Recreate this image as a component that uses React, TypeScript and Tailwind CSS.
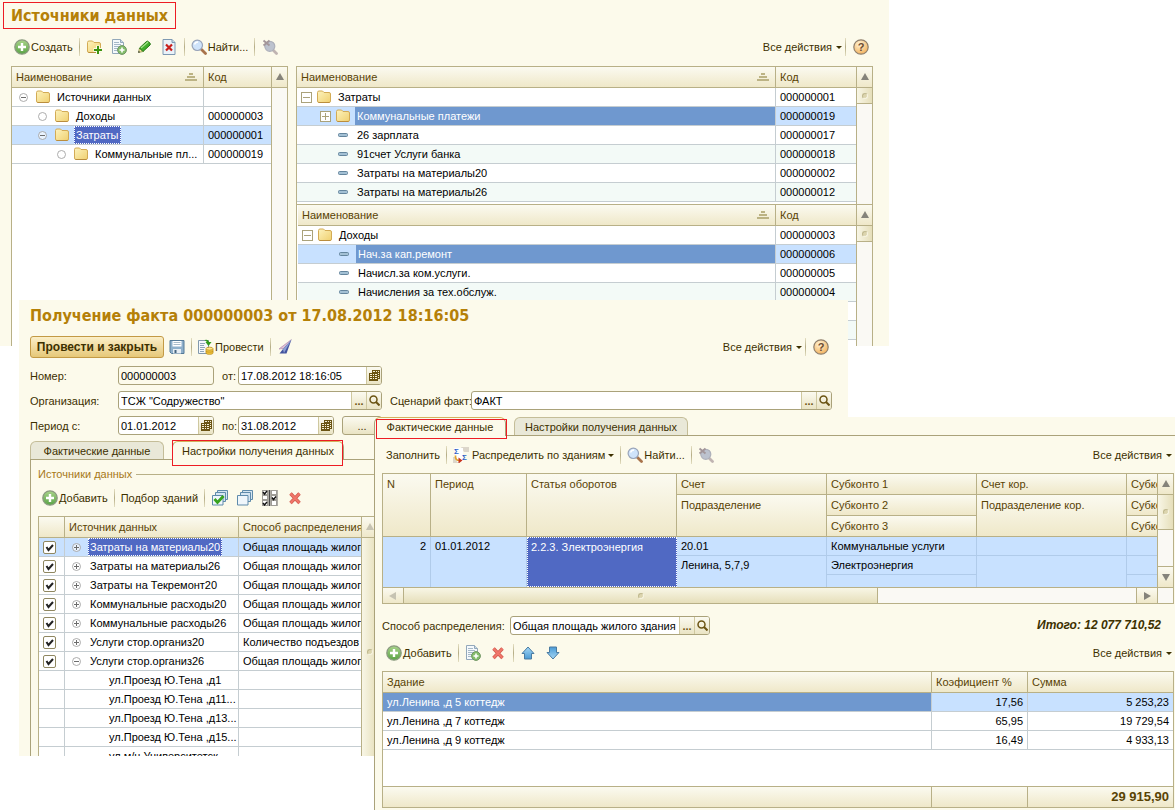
import type { ReactNode } from "react";
import clsx from "clsx";

const TH =
  "h-[21px] border-b border-r border-[#b8b087] bg-linear-to-b from-[#fbfaf0] to-[#efe8c9] pl-1 text-left align-top font-normal leading-5 text-[#594304] whitespace-nowrap overflow-hidden last:border-r-0";
const TD =
  "h-[19px] border-b border-r border-[#c5cdd1] p-0 leading-[18px] whitespace-nowrap overflow-hidden last:border-r-0";
const TABLE = "w-full table-fixed border-separate border-spacing-0";

/* ---------- iconos ---------- */

function Svg({ children }: { children: ReactNode }) {
  return (
    <svg viewBox="0 0 16 16" className="block size-4 shrink-0" aria-hidden="true">
      {children}
    </svg>
  );
}

const AddIcon = () => (
  <Svg>
    <defs>
      <linearGradient id="verde" x1="0" y1="0" x2="0" y2="1">
        <stop offset="0" stopColor="#a9d48b" />
        <stop offset="1" stopColor="#5aa345" />
      </linearGradient>
    </defs>
    <circle cx="8" cy="8" r="7.2" fill="url(#verde)" stroke="#8b9a80" strokeWidth="1.3" />
    <path d="M8 4v8M4 8h8" stroke="#fff" strokeWidth="2.4" />
  </Svg>
);

const FolderShape = () => (
  <>
    <defs>
      <linearGradient id="carpeta" x1="0" y1="0" x2="1" y2="1">
        <stop offset="0" stopColor="#fdf3bd" />
        <stop offset="1" stopColor="#f0d070" />
      </linearGradient>
    </defs>
    <path
      d="M1.5 3.5q0-1.5 1.5-1.5h3.5l1.5 1.5h5q1.5 0 1.5 1.5v7q0 1.5-1.5 1.5H3q-1.5 0-1.5-1.5z"
      fill="url(#carpeta)"
      stroke="#d3ab55"
    />
    <path d="M2.5 13.5h11" stroke="#ba8d3d" />
  </>
);

const FolderIcon = () => (
  <Svg>
    <FolderShape />
  </Svg>
);

const FolderAddIcon = () => (
  <Svg>
    <FolderShape />
    <path d="M12 6.5v9M7.5 11h9" stroke="#fbfaea" strokeWidth="4" />
    <path d="M12 7v8M8 11h8" stroke="#3d9410" strokeWidth="2" />
  </Svg>
);

const DocAddIcon = () => (
  <Svg>
    <path d="M1.5.5h8l3 3v11h-11z" fill="#f5f9fc" stroke="#93a8ba" />
    <path d="M9.5.5v3h3" fill="#cbdbe8" stroke="#93a8ba" />
    <path d="M3 3.5h5M3 5.5h7M3 7.5h6M3 9.5h4M3 11.5h3" stroke="#a5b8c8" />
    <circle cx="11" cy="11" r="4.4" fill="#83bd6a" stroke="#6f9464" />
    <path d="M11 8.5v5M8.5 11h5" stroke="#fff" strokeWidth="1.6" />
  </Svg>
);

const PencilIcon = () => (
  <Svg>
    <path d="M2.5 13.5l1-4.5 3.5 3.5z" fill="#f7e3a0" stroke="#7a8a3a" strokeWidth=".7" />
    <path d="M2.2 13.8l.5-2 1.5 1.5z" fill="#333" />
    <path d="M3.5 9l7-6.5q1-.8 2 .2l1.3 1.3q1 1 .2 2l-7 6.5z" fill="#3fae2a" stroke="#237512" />
    <path d="M5 9l7-6" stroke="#a5e28c" strokeWidth="1.2" />
  </Svg>
);

const DocDeleteIcon = () => (
  <Svg>
    <path d="M2 .5h9l3 3v12H2z" fill="#eaf2f9" stroke="#7e99b2" />
    <path d="M11 .5v3h3" fill="#c9d9e6" stroke="#7e99b2" />
    <path d="M5 5.5l6 6M11 5.5l-6 6" stroke="#c8201c" strokeWidth="2.2" />
  </Svg>
);

const SearchIcon = () => (
  <Svg>
    <path d="M10.5 10.5l4 4" stroke="#a8734b" strokeWidth="2.8" strokeLinecap="round" />
    <circle cx="6.3" cy="6.3" r="5.2" fill="#cfe3fa" stroke="#98a3b8" strokeWidth="1.2" />
    <path d="M3.5 5.5q1-2.5 3.5-2.5" fill="none" stroke="#fff" strokeWidth="1.5" />
  </Svg>
);

const SearchOffIcon = () => (
  <Svg>
    <path d="M11 11l3.5 3.5" stroke="#c0b4b2" strokeWidth="2.8" strokeLinecap="round" />
    <circle cx="7.8" cy="7.3" r="5" fill="#bcc2ce" stroke="#adb0ba" strokeWidth="1.2" />
    <path d="M1.5 1.5l6 5M7.5 1.5l-6 5" stroke="#a3969a" strokeWidth="1.9" />
  </Svg>
);

const HelpIcon = () => (
  <Svg>
    <defs>
      <radialGradient id="ayuda" cx=".4" cy=".3" r=".8">
        <stop offset="0" stopColor="#fff3d6" />
        <stop offset="1" stopColor="#f2ab50" />
      </radialGradient>
    </defs>
    <circle cx="8" cy="8" r="7.2" fill="url(#ayuda)" stroke="#8f7f6c" strokeWidth="1.2" />
    <text x="8" y="12" textAnchor="middle" fontSize="11" fontWeight="700" fill="#6b4a30">
      ?
    </text>
  </Svg>
);

const SaveIcon = () => (
  <Svg>
    <path d="M1 1.5h14v13H2.5L1 13z" fill="#8fb0cb" stroke="#557a98" />
    <path d="M3.5 2h9v5.5h-9z" fill="#fff" />
    <path d="M4.5 3.5h7M4.5 5.5h7" stroke="#a9bccb" />
    <path d="M4 10h8v4.5H4z" fill="#e7eef4" />
    <path d="M5.5 11h2v3h-2z" fill="#44657f" />
  </Svg>
);

const PostIcon = () => (
  <Svg>
    <path d="M.5 1.5h10v13H.5z" fill="#f4f8fb" stroke="#8299ad" />
    <path d="M2 4.5h5M2 6.5h4M2 8.5h5M2 10.5h4M2 12.5h4" stroke="#8fa6ba" />
    <path d="M6.5 1q4-1 4.5 2h2.5L10.5 7 7.5 3h1.5" fill="#2f9a1c" />
    <path d="M8 10v4c0 1.8 7 1.8 7 0v-4z" fill="#f3c63d" stroke="#bd8e1d" strokeWidth=".8" />
    <ellipse cx="11.5" cy="9.7" rx="3.5" ry="1.5" fill="#ffe88b" stroke="#bd8e1d" strokeWidth=".8" />
    <path d="M8 12c0 1.5 7 1.5 7 0" fill="none" stroke="#bd8e1d" strokeWidth=".8" />
  </Svg>
);

const PlaneIcon = () => (
  <Svg>
    <path d="M14.5.5L2 9.5l4 .5z" fill="#e0c3d6" />
    <path d="M14.5.5L2 10l4-.5" fill="none" stroke="#b58fb5" strokeWidth=".7" />
    <path d="M14.5.5L6 10l-3.5 4.5h7z" fill="#42539e" />
    <path d="M14.5.5L6 10.5l1 3.5z" fill="#8ea0d4" />
  </Svg>
);

const StackIcon = ({ checked = false }: { checked?: boolean }) => (
  <Svg>
    <path d="M5.5.5h10v9h-10z" fill="#d5e5f1" stroke="#5f8bab" />
    <path d="M3.5 2.5h10v9h-10z" fill="#d5e5f1" stroke="#5f8bab" />
    <path d="M.5 5.5h10.5v9.5H.5z" fill="#eff6fb" stroke="#5f8bab" />
    {checked && (
      <path d="M2.5 9l3 3.5L11.5 6" fill="none" stroke="#38a31f" strokeWidth="2.8" />
    )}
  </Svg>
);

const InvertIcon = () => (
  <Svg>
    <path d="M0 0h16v16H0z" fill="#aeaca5" />
    <path
      d="M.5.5h5v4h-5zM.5 5.5h5v4h-5zM.5 10.5h5v5h-5zM9.5.5h5v4h-5zM9.5 5.5h5v4h-5zM9.5 10.5h5v5h-5z"
      fill="#fff"
      stroke="#85837c"
      strokeWidth=".7"
    />
    <path d="M7.5 0v16" stroke="#4a4a4a" />
    <path
      d="M1 2l1.5 2L5 1M1 13l1.5 2L5 12M10 7.5l1.5 2L14 6.5"
      fill="none"
      stroke="#111"
      strokeWidth="1.4"
    />
  </Svg>
);

const DeleteIcon = () => (
  <Svg>
    <path d="M3.5 3.5l9 9.5M12.5 3.5l-9 9.5" stroke="#cf5a4e" strokeWidth="3.4" />
    <path d="M3.5 3.5l9 9.5M12.5 3.5l-9 9.5" stroke="#f0766a" strokeWidth="2" />
  </Svg>
);

const MoveIcon = ({ down = false }: { down?: boolean }) => (
  <Svg>
    <defs>
      <linearGradient id="azul" x1="0" y1="0" x2="0" y2="1">
        <stop offset="0" stopColor="#a6d8f6" />
        <stop offset="1" stopColor="#4a9ad4" />
      </linearGradient>
    </defs>
    <path
      d="M8 2l6 6.5h-2.5V14h-7V8.500H2z"
      transform={down ? "rotate(180 8 8)" : undefined}
      fill="url(#azul)"
      stroke="#4a7ba1"
      strokeLinejoin="round"
    />
  </Svg>
);

const SigmaIcon = () => (
  <Svg>
    <path d="M8 0h8v5h-5zM0 10h4l3 6H0z" fill="#dcd6ca" />
    <path d="M1 1h9v14H4z" fill="#fff" />
    <text x="1" y="7" fontSize="8" fontWeight="700" fill="#2e62c8">Σ</text>
    <text x="9" y="13" fontSize="8" fontWeight="700" fill="#2e62c8">Σ</text>
    <path d="M2.5 8.5q-.5 5 4 5" fill="none" stroke="#e0a32c" strokeWidth="1.7" />
    <path d="M5.5 10.5l4 3-4 3z" fill="#c9341c" />
  </Svg>
);

const CalendarIcon = () => (
  <svg viewBox="0 0 11 11" className="block size-[11px]" aria-hidden="true">
    <path d="M3 0h8v9H9v2H0V3h3z" fill="#6b5413" />
    <path
      d="M4 1.5h2M7 1.5h1M9 1.5h1M1 4.5h2M4 4.5h1M6 4.5h2M1 6.5h2M4 6.5h1M6 6.5h2M1 8.5h2M4 8.5h1M6 8.5h2M9 3.5h1M9 5.5h1M9 7.5h1"
      stroke="#f6f1d8"
    />
  </svg>
);

const LensIcon = () => (
  <svg viewBox="0 0 11 11" className="block size-[11px]" aria-hidden="true">
    <circle cx="4.5" cy="4.5" r="3.5" fill="none" stroke="#6b5413" strokeWidth="1.5" />
    <path d="M7 7l3.5 3.5" stroke="#6b5413" strokeWidth="2" />
  </svg>
);

const SortIcon = () => (
  <svg viewBox="0 0 12 8" className="mt-[6px] mr-[6px] block h-2 w-3" aria-hidden="true">
    <path d="M4 0h4v2H4zM2 3h8v2H2zM0 6h12v2H0z" fill="#bcb384" />
  </svg>
);

const DashIcon = () => (
  <svg viewBox="0 0 10 4" className="block h-1 w-[10px] shrink-0" aria-hidden="true">
    <rect x=".5" y=".5" width="9" height="3" rx="1" fill="#a3c0d4" stroke="#64859d" />
  </svg>
);

const Caret = () => (
  <svg viewBox="0 0 6 3" className="mt-px block h-[3px] w-[6px]" aria-hidden="true">
    <path d="M0 0h6L3 3z" fill="#3d3000" />
  </svg>
);

type Mark = "plus" | "minus" | "none";

const RoundMark = ({ mark }: { mark: Mark }) => (
  <svg viewBox="0 0 9 9" className="block size-[9px] shrink-0" aria-hidden="true">
    <circle cx="4.5" cy="4.5" r="4" fill="#fff" fillOpacity=".6" stroke="#a3a3a3" strokeWidth=".9" />
    {mark !== "none" && <path d="M2 4.5h5" stroke="#6d6d6d" />}
    {mark === "plus" && <path d="M4.5 2v5" stroke="#6d6d6d" />}
  </svg>
);

const SquareMark = ({ mark }: { mark: Mark }) => (
  <svg viewBox="0 0 11 11" className="block size-[11px] shrink-0" aria-hidden="true">
    {mark !== "none" && <rect x=".5" y=".5" width="10" height="10" fill="#fff" stroke="#aaa27a" />}
    {mark !== "none" && <path d="M2 5.5h7" stroke="#aaa27a" />}
    {mark === "plus" && <path d="M5.5 2v7" stroke="#aaa27a" />}
  </svg>
);

/* ---------- piezas comunes ---------- */

const Sep = () => (
  <span className="mx-[2px] h-[18px] w-px bg-linear-to-b from-[#e4dfc2] via-[#b5ad86] to-[#e4dfc2]" />
);

function Tool({ icon, label, text }: { icon?: ReactNode; label?: string; text?: string }) {
  return (
    <button
      type="button"
      aria-label={label}
      className={clsx("flex h-6 items-center justify-center gap-px", text ? "px-1" : "w-[25px]")}
    >
      {icon}
      {text}
    </button>
  );
}

const AllActions = () => (
  <button type="button" className="ml-auto flex items-center gap-1">
    Все действия
    <Caret />
  </button>
);

function Field({
  label,
  id,
  value,
  width,
  labelWidth,
  date = false,
  lookup = false,
}: {
  label: string;
  id: string;
  value: string;
  width: string;
  labelWidth: string;
  date?: boolean;
  lookup?: boolean;
}) {
  const boton =
    "flex w-[15px] items-center justify-center border-l border-[#cfc89f] bg-linear-to-b from-[#fbfaf0] to-[#eae4c4]";
  return (
    <div className="flex items-center">
      <label htmlFor={id} className={clsx("shrink-0 whitespace-nowrap", labelWidth)}>
        {label}
      </label>
      <div
        className={clsx(
          "flex h-[19px] overflow-hidden rounded-[3px] border border-[#aaa27a]",
          date || lookup ? "bg-white" : "bg-[#fcfaeb]",
          width,
        )}
      >
        <input
          id={id}
          defaultValue={value}
          className="h-[18px] min-w-0 flex-1 bg-transparent px-[2px] text-black outline-none"
        />
        {lookup && (
          <button type="button" aria-label="Выбрать" className={clsx(boton, "font-bold text-[#6b5413]")}>
            ...
          </button>
        )}
        {(lookup || date) && (
          <button type="button" aria-label="Открыть" className={boton}>
            {date ? <CalendarIcon /> : <LensIcon />}
          </button>
        )}
      </div>
    </div>
  );
}

function Tab({ text, active = false, width }: { text: string; active?: boolean; width: string }) {
  return (
    <button
      type="button"
      role="tab"
      aria-selected={active}
      className={clsx(
        "rounded-t-md border border-b-0 text-center",
        active
          ? "-mb-px h-[19px] border-[#aaa27a] border-t-[#d3b25e] bg-[#fcfaeb]"
          : "h-[18px] border-[#c4bd98] bg-[#e9e8d8]",
        width,
      )}
    >
      {text}
    </button>
  );
}

const ARROWS = { up: "M0 7h8L4 0z", down: "M0 1h8L4 8z", left: "M7 0v8L0 4z", right: "M1 0v8l7-4z" };

function ScrollButton({ dir, off = false, className }: { dir: keyof typeof ARROWS; off?: boolean; className: string }) {
  return (
    <button
      type="button"
      aria-label={dir}
      className={clsx(
        "flex shrink-0 items-center justify-center border-[#b8b087] bg-linear-to-b from-[#fbfaf0] to-[#efe8c9]",
        className,
      )}
    >
      <svg viewBox="0 0 8 8" className="block size-2" aria-hidden="true">
        <path d={ARROWS[dir]} fill={off ? "#c6c3b2" : "#85837a"} />
      </svg>
    </button>
  );
}

const Dot = () => (
  <span className="size-[6px] rounded-full border border-[#c0b98f] border-r-[#f7f4e2] border-b-[#f7f4e2] bg-[#dcd5ae]" />
);

function VScroll({ thumb, off = false }: { thumb?: string; off?: boolean }) {
  return (
    <div className="flex w-4 shrink-0 flex-col border-l border-[#b8b087] bg-[#faf9f4]">
      <ScrollButton dir="up" off={off} className="h-[21px] border-b" />
      {thumb && (
        <div
          className={clsx(
            "flex items-center justify-center border-b border-[#b8b087] bg-linear-to-r from-[#f8f6e6] to-[#e6dfba]",
            thumb,
          )}
        >
          <Dot />
        </div>
      )}
    </div>
  );
}

/* ---------- ventana 1 ---------- */

const arbol: { nombre: string; codigo: string; pad: string; mark: Mark; sel?: boolean }[] = [
  { nombre: "Источники данных", codigo: "", pad: "pl-[7px]", mark: "minus" },
  { nombre: "Доходы", codigo: "000000003", pad: "pl-[26px]", mark: "none" },
  { nombre: "Затраты", codigo: "000000001", pad: "pl-[26px]", mark: "minus", sel: true },
  { nombre: "Коммунальные пл...", codigo: "000000019", pad: "pl-[45px]", mark: "none" },
];

type Item = { nombre: string; codigo: string; nivel: number; mark?: Mark; sel?: boolean };

const costos: Item[] = [
  { nombre: "Затраты", codigo: "000000001", nivel: 0, mark: "minus" },
  { nombre: "Коммунальные платежи", codigo: "000000019", nivel: 1, mark: "plus", sel: true },
  { nombre: "26 зарплата", codigo: "000000017", nivel: 1 },
  { nombre: "91счет Услуги банка", codigo: "000000018", nivel: 1 },
  { nombre: "Затраты на материалы20", codigo: "000000002", nivel: 1 },
  { nombre: "Затраты на материалы26", codigo: "000000012", nivel: 1 },
];

const ingresos: Item[] = [
  { nombre: "Доходы", codigo: "000000003", nivel: 0, mark: "minus" },
  { nombre: "Нач.за кап.ремонт", codigo: "000000006", nivel: 1, sel: true },
  { nombre: "Начисл.за ком.услуги.", codigo: "000000005", nivel: 1 },
  { nombre: "Начисления за тех.обслуж.", codigo: "000000004", nivel: 1 },
  { nombre: "", codigo: "", nivel: 1 },
  { nombre: "", codigo: "", nivel: 1 },
  { nombre: "", codigo: "", nivel: 1 },
];

function NameHeader() {
  return (
    <th className={TH}>
      <div className="flex justify-between">
        Наименование
        <SortIcon />
      </div>
    </th>
  );
}

function ItemTable({ items }: { items: Item[] }) {
  return (
    <table className={TABLE}>
      <colgroup>
        <col />
        <col className="w-20" />
      </colgroup>
      <thead>
        <tr>
          <NameHeader />
          <th className={TH}>Код</th>
        </tr>
      </thead>
      <tbody>
        {items.map((item, i) => (
          <tr key={i} className={item.sel ? "bg-[#c8e1ff]" : i > 1 && i % 2 ? "bg-[#f3faf7]" : "bg-white"}>
            <td className={TD}>
              <div className={clsx("flex h-[18px] items-center", item.nivel ? "pl-[23px]" : "pl-1")}>
                <SquareMark mark={item.mark ?? "none"} />
                <span className="ml-1 flex w-4 shrink-0 items-center justify-center">
                  {item.mark ? <FolderIcon /> : item.nombre && <DashIcon />}
                </span>
                <span className={clsx("ml-1 flex-1 px-[2px]", item.sel && "bg-[#6f98cf] text-white")}>
                  {item.nombre}
                </span>
              </div>
            </td>
            <td className={TD}>
              <span className="pl-1">{item.codigo}</span>
            </td>
          </tr>
        ))}
      </tbody>
    </table>
  );
}

function SourcesWindow() {
  return (
    <section className="absolute top-0 right-[286px] left-0 flex h-[346px] flex-col overflow-hidden bg-[#fcfaeb] pr-4">
      <h1 className="mt-[2px] ml-[3px] h-[27px] self-start border border-[#ed1c24] px-[7px] font-[DejaVu_Sans_Condensed,Noto_Sans,sans-serif] text-[16px] leading-[26px] font-bold text-[#b58007]">
        Источники данных
      </h1>
      <div className="mt-[6px] flex h-6 items-center pl-[10px]">
        <Tool icon={<AddIcon />} text="Создать" />
        <Sep />
        <Tool icon={<FolderAddIcon />} label="Создать группу" />
        <Tool icon={<DocAddIcon />} label="Скопировать" />
        <Tool icon={<PencilIcon />} label="Изменить" />
        <Tool icon={<DocDeleteIcon />} label="Пометить на удаление" />
        <Sep />
        <Tool icon={<SearchIcon />} text="Найти..." />
        <Sep />
        <Tool icon={<SearchOffIcon />} label="Отменить поиск" />
        <AllActions />
        <span className="w-px" />
        <Sep />
        <Tool icon={<HelpIcon />} label="Справка" />
      </div>
      <div className="mt-[7px] flex flex-1 gap-2 pl-[11px] text-black">
        <div className="flex w-[277px] shrink-0 border border-b-0 border-[#b8b087] bg-white">
          <div className="min-w-0 flex-1">
            <table className={TABLE}>
              <colgroup>
                <col />
                <col className="w-[67px]" />
              </colgroup>
              <thead>
                <tr>
                  <NameHeader />
                  <th className={TH}>Код</th>
                </tr>
              </thead>
              <tbody>
                {arbol.map((nodo) => (
                  <tr key={nodo.nombre} className={nodo.sel ? "bg-[#c8e1ff]" : "bg-white"}>
                    <td className={TD}>
                      <div className={clsx("flex h-[18px] items-center", nodo.pad)}>
                        <RoundMark mark={nodo.mark} />
                        <span className="ml-[7px]">
                          <FolderIcon />
                        </span>
                        <span
                          className={clsx(
                            "ml-1 border border-dotted px-px leading-4",
                            nodo.sel ? "border-white bg-[#5069c3] text-white" : "border-transparent",
                          )}
                        >
                          {nodo.nombre}
                        </span>
                      </div>
                    </td>
                    <td className={TD}>
                      <span className="pl-1">{nodo.codigo}</span>
                    </td>
                  </tr>
                ))}
              </tbody>
            </table>
          </div>
          <VScroll />
        </div>
        <div className="flex min-w-0 flex-1 flex-col border border-b-0 border-[#b8b087] bg-white">
          <div className="flex h-[137px] shrink-0">
            <div className="min-w-0 flex-1">
              <ItemTable items={costos} />
            </div>
            <VScroll thumb="h-4" />
          </div>
          <div className="flex flex-1 border-t border-[#b8b087] pl-px">
            <div className="min-w-0 flex-1">
              <ItemTable items={ingresos} />
            </div>
            <VScroll thumb="h-4" />
          </div>
        </div>
      </div>
    </section>
  );
}

/* ---------- ventana 2 ---------- */

const AREA = "Общая площадь жилого";

const fuentes: { nombre: string; metodo: string; mark: Mark; sel?: boolean }[] = [
  { nombre: "Затраты на материалы20", metodo: AREA, mark: "plus", sel: true },
  { nombre: "Затраты на материалы26", metodo: AREA, mark: "plus" },
  { nombre: "Затраты на Текремонт20", metodo: AREA, mark: "plus" },
  { nombre: "Коммунальные расходы20", metodo: AREA, mark: "plus" },
  { nombre: "Коммунальные расходы26", metodo: AREA, mark: "plus" },
  { nombre: "Услуги стор.организ20", metodo: "Количество подъездов", mark: "plus" },
  { nombre: "Услуги стор.организ26", metodo: AREA, mark: "minus" },
];

const edificios = [
  "ул.Проезд Ю.Тена ,д1",
  "ул.Проезд Ю.Тена ,д11...",
  "ул.Проезд Ю.Тена ,д13...",
  "ул.Проезд Ю.Тена ,д15...",
  "ул.м/н Университетск...",
];

function FactWindow() {
  return (
    <section className="absolute top-[300px] right-[327px] left-[19px] h-[456px] overflow-hidden bg-[#fcfaeb] pl-[11px]">
      <h2 className="pt-1 font-[DejaVu_Sans_Condensed,Noto_Sans,sans-serif] text-[16px] leading-6 font-bold text-[#b58007]">
        Получение факта 000000003 от 17.08.2012 18:16:05
      </h2>
      <div className="mt-[7px] flex h-6 items-center pr-[15px]">
        <button
          type="button"
          className="h-[22px] w-[134px] rounded-[3px] border border-[#c39a45] bg-linear-to-b from-[#fbefc8] to-[#e6c878] text-[12px] font-bold whitespace-nowrap"
        >
          Провести и закрыть
        </button>
        <Tool icon={<SaveIcon />} label="Записать" />
        <Sep />
        <Tool icon={<PostIcon />} text="Провести" />
        <Sep />
        <Tool icon={<PlaneIcon />} label="Перейти" />
        <AllActions />
        <span className="w-px" />
        <Sep />
        <Tool icon={<HelpIcon />} label="Справка" />
      </div>
      <div className="mt-[7px] flex flex-col gap-[6px] pr-4">
        <div className="flex gap-2">
          <Field label="Номер:" id="numero" value="000000003" width="w-24" labelWidth="w-[88px]" />
          <Field label="от:" id="fecha" value="17.08.2012 18:16:05" width="w-36" labelWidth="w-4" date />
        </div>
        <div className="flex gap-2">
          <Field label="Организация:" id="org" value={'ТСЖ "Содружество"'} width="w-[264px]" labelWidth="w-[88px]" lookup />
          <div className="flex-1 [&>div>div]:flex-1">
            <Field label="Сценарий факт:" id="escenario" value="ФАКТ" width="min-w-0" labelWidth="w-[81px]" lookup />
          </div>
        </div>
        <div className="flex gap-2">
          <Field label="Период с:" id="desde" value="01.01.2012" width="w-24" labelWidth="w-[88px]" date />
          <Field label="по:" id="hasta" value="31.08.2012" width="w-24" labelWidth="w-4" date />
          <button
            type="button"
            className="h-[19px] w-10 rounded-[3px] border border-[#aaa27a] bg-linear-to-b from-[#fbfaf0] to-[#eae4c4] leading-4"
          >
            ...
          </button>
        </div>
      </div>
      <div className="relative mt-[6px] flex items-start gap-2 border-b border-[#aaa27a]" role="tablist">
        <Tab text="Фактические данные" width="w-[134px]" />
        <Tab text="Настройки получения данных" width="w-[172px]" active />
        <span className="pointer-events-none absolute -top-px left-[142px] h-[26px] w-[171px] border border-[#ed1c24]" />
      </div>
      <div className="border-l border-[#aaa27a] pl-[7px]">
        <div className="flex items-center gap-1 pt-[6px] text-[#a67818]">
          <span className="leading-4">Источники данных</span>
          <span className="h-px flex-1 bg-[#b8b087]" />
        </div>
        <div className="mt-1 flex h-6 items-center">
          <Tool icon={<AddIcon />} text="Добавить" />
          <Sep />
          <Tool text="Подбор зданий" />
          <Sep />
          <Tool icon={<StackIcon checked />} label="Установить флажки" />
          <Tool icon={<StackIcon />} label="Снять флажки" />
          <Tool icon={<InvertIcon />} label="Инвертировать флажки" />
          <Tool icon={<DeleteIcon />} label="Удалить" />
        </div>
        <div className="mt-[6px] flex w-[340px] border border-[#b8b087] bg-white text-black">
          <div className="min-w-0 flex-1">
            <table className={TABLE}>
              <colgroup>
                <col className="w-[26px]" />
                <col className="w-[174px]" />
                <col />
              </colgroup>
              <thead>
                <tr>
                  <th className={TH} />
                  <th className={TH}>Источник данных</th>
                  <th className={TH}>Способ распределения</th>
                </tr>
              </thead>
              <tbody>
                {fuentes.map((f) => (
                  <tr key={f.nombre} className={f.sel ? "bg-[#c8e1ff]" : "bg-white"}>
                    <td className={TD}>
                      <span className="ml-1 grid size-[13px]">
                        <input
                          type="checkbox"
                          defaultChecked
                          aria-label={f.nombre}
                          className="peer col-start-1 row-start-1 size-[13px] appearance-none rounded-[2px] border border-[#8f8760] bg-white"
                        />
                        <svg
                          viewBox="0 0 13 13"
                          className="pointer-events-none invisible col-start-1 row-start-1 size-[13px] peer-checked:visible"
                          aria-hidden="true"
                        >
                          <path d="M3.5 6l2 3L10 4" fill="none" stroke="#222" strokeWidth="2" />
                        </svg>
                      </span>
                    </td>
                    <td className={TD}>
                      <div className="flex h-[18px] items-center pl-[7px]">
                        <RoundMark mark={f.mark} />
                        <span
                          className={clsx(
                            "ml-[7px] border border-dotted px-px leading-4",
                            f.sel ? "border-white bg-[#5069c3] text-white" : "border-transparent",
                          )}
                        >
                          {f.nombre}
                        </span>
                      </div>
                    </td>
                    <td className={TD}>
                      <span className="pl-1">{f.metodo}</span>
                    </td>
                  </tr>
                ))}
                {edificios.map((nombre) => (
                  <tr key={nombre}>
                    <td className={TD} />
                    <td className={TD}>
                      <span className="pl-11">{nombre}</span>
                    </td>
                    <td className={TD} />
                  </tr>
                ))}
              </tbody>
            </table>
          </div>
          <VScroll off thumb="flex-1" />
        </div>
      </div>
    </section>
  );
}

/* ---------- ventana 3 ---------- */

const reparto = [
  { edificio: "ул.Ленина ,д 5 коттедж", coef: "17,56", suma: "5 253,23" },
  { edificio: "ул.Ленина ,д 7 коттедж", coef: "65,95", suma: "19 729,54" },
  { edificio: "ул.Ленина ,д 9 коттедж", coef: "16,49", suma: "4 933,13" },
];

const SEL = "border-[#b0cbea] px-1 align-top leading-[18px] whitespace-nowrap";

function TurnoverTable() {
  return (
    <div className="border border-[#b8b087] text-black">
      <div className="flex">
        <div className="h-[113px] min-w-0 flex-1 overflow-hidden">
          <table className={TABLE}>
            <colgroup>
              <col className="w-12" />
              <col className="w-24" />
              <col className="w-[150px]" />
              <col className="w-[150px]" />
              <col className="w-[150px]" />
              <col className="w-[150px]" />
              <col />
            </colgroup>
            <thead>
              <tr>
                <th rowSpan={3} className={TH}>N</th>
                <th rowSpan={3} className={TH}>Период</th>
                <th rowSpan={3} className={TH}>Статья оборотов</th>
                <th className={TH}>Счет</th>
                <th className={TH}>Субконто 1</th>
                <th className={TH}>Счет кор.</th>
                <th className={TH}>Субко</th>
              </tr>
              <tr>
                <th rowSpan={2} className={TH}>Подразделение</th>
                <th className={TH}>Субконто 2</th>
                <th rowSpan={2} className={TH}>Подразделение кор.</th>
                <th className={TH}>Субко</th>
              </tr>
              <tr>
                <th className={TH}>Субконто 3</th>
                <th className={TH}>Субко</th>
              </tr>
            </thead>
            <tbody className="bg-[#c8e1ff]">
              <tr>
                <td rowSpan={3} className={clsx(SEL, "border-r text-right")}>2</td>
                <td rowSpan={3} className={clsx(SEL, "border-r")}>01.01.2012</td>
                <td
                  rowSpan={3}
                  className="border border-dotted border-white bg-[#5069c3] px-[3px] align-top leading-[18px] text-white"
                >
                  2.2.3. Злектроэнергия
                </td>
                <td className={clsx(SEL, "h-[19px] border-r border-b")}>20.01</td>
                <td className={clsx(SEL, "h-[19px] border-r border-b")}>Коммунальные услуги</td>
                <td className={clsx(SEL, "h-[19px] border-r border-b")} />
                <td className={clsx(SEL, "h-[19px] border-b")} />
              </tr>
              <tr>
                <td rowSpan={2} className={clsx(SEL, "border-r")}>Ленина, 5,7,9</td>
                <td className={clsx(SEL, "h-[19px] border-r border-b")}>Электроэнергия</td>
                <td rowSpan={2} className={clsx(SEL, "border-r")} />
                <td className={clsx(SEL, "h-[19px] border-b")} />
              </tr>
              <tr>
                <td className={clsx(SEL, "h-3 border-r")} />
                <td className={clsx(SEL, "h-3")} />
              </tr>
            </tbody>
          </table>
        </div>
        <div className="flex w-4 shrink-0 flex-col border-l border-[#b8b087] bg-[#faf9f4]">
          <ScrollButton dir="up" className="h-[21px] border-b" />
          <div className="flex h-[35px] items-center justify-center border-b border-[#b8b087] bg-linear-to-r from-[#f8f6e6] to-[#e6dfba]">
            <Dot />
          </div>
          <ScrollButton dir="down" className="mt-auto h-[21px] border-t" />
        </div>
      </div>
      <div className="flex h-4 border-t border-[#b8b087] bg-[#faf9f4]">
        <ScrollButton dir="left" off className="w-[21px] border-r" />
        <div className="flex w-3/5 items-center justify-center border-r border-[#b8b087] bg-linear-to-b from-[#f8f6e6] to-[#e6dfba]">
          <Dot />
        </div>
        <ScrollButton dir="right" className="ml-auto w-[21px] border-l" />
        <span className="w-4 border-l border-[#b8b087]" />
      </div>
    </div>
  );
}

function DistributionWindow() {
  return (
    <section className="absolute top-[417px] right-0 left-[374px] flex min-h-[393px] flex-col bg-[#fcfaeb]">
      <div className="relative flex items-start gap-2 border-b border-[#aaa27a]" role="tablist">
        <Tab text="Фактические данные" width="w-[132px]" active />
        <Tab text="Настройки получения данных" width="w-[174px]" />
        <span className="pointer-events-none absolute top-[2px] left-[2px] h-5 w-[131px] border border-[#ed1c24]" />
      </div>
      <div className="flex flex-1 flex-col border-l border-[#aaa27a] pl-[7px]">
        <div className="mt-[7px] flex h-6 items-center pr-[3px]">
          <Tool text="Заполнить" />
          <Sep />
          <button type="button" className="flex items-center gap-[3px] px-1">
            <SigmaIcon />
            Распределить по зданиям
            <Caret />
          </button>
          <Sep />
          <Tool icon={<SearchIcon />} text="Найти..." />
          <Sep />
          <Tool icon={<SearchOffIcon />} label="Отменить поиск" />
          <AllActions />
        </div>
        <div className="mt-[6px] mr-px">
          <TurnoverTable />
        </div>
        <div className="mt-3 flex items-center justify-between pr-[14px]">
          <Field
            label="Способ распределения:"
            id="metodo"
            value="Общая площадь жилого здания"
            width="w-[200px]"
            labelWidth="w-32"
            lookup
          />
          <span className="text-[12px] leading-[19px] font-bold italic">Итого: 12 077 710,52</span>
        </div>
        <div className="mt-[6px] flex h-6 items-center pr-[3px]">
          <Tool icon={<AddIcon />} text="Добавить" />
          <Sep />
          <Tool icon={<DocAddIcon />} label="Скопировать" />
          <Tool icon={<DeleteIcon />} label="Удалить" />
          <Sep />
          <Tool icon={<MoveIcon />} label="Переместить вверх" />
          <Tool icon={<MoveIcon down />} label="Переместить вниз" />
          <AllActions />
        </div>
        <div className="mt-[6px] mr-px mb-[2px] border border-[#b8b087] bg-white text-black">
          <table className={TABLE}>
            <colgroup>
              <col />
              <col className="w-24" />
              <col className="w-[145px]" />
            </colgroup>
            <thead>
              <tr>
                <th className={TH}>Здание</th>
                <th className={TH}>Коэфициент %</th>
                <th className={TH}>Сумма</th>
              </tr>
            </thead>
            <tbody>
              {reparto.map((r, i) => (
                <tr key={r.edificio} className={i === 0 ? "bg-[#c8e1ff]" : ""}>
                  <td className={clsx(TD, i === 0 && "bg-[#6f98cf] text-white")}>
                    <span className="pl-1">{r.edificio}</span>
                  </td>
                  <td className={clsx(TD, "text-right")}>
                    <span className="pr-1">{r.coef}</span>
                  </td>
                  <td className={clsx(TD, "text-right")}>
                    <span className="pr-1">{r.suma}</span>
                  </td>
                </tr>
              ))}
              <tr>
                <td colSpan={3} className="h-9" />
              </tr>
            </tbody>
            <tfoot>
              <tr>
                <td className={clsx(TH, "border-t border-b-0")} />
                <td className={clsx(TH, "border-t border-b-0")} />
                <td className={clsx(TH, "border-t border-b-0")}>
                  <div className="pr-1 text-right text-[13px] font-bold">29 915,90</div>
                </td>
              </tr>
            </tfoot>
          </table>
        </div>
      </div>
    </section>
  );
}

export default function App() {
  return (
    <main className="relative min-h-screen overflow-hidden bg-white font-[Liberation_Sans,Arial,sans-serif] text-[11px] leading-4 text-[#3d3000]">
      <SourcesWindow />
      <FactWindow />
      <DistributionWindow />
    </main>
  );
}
